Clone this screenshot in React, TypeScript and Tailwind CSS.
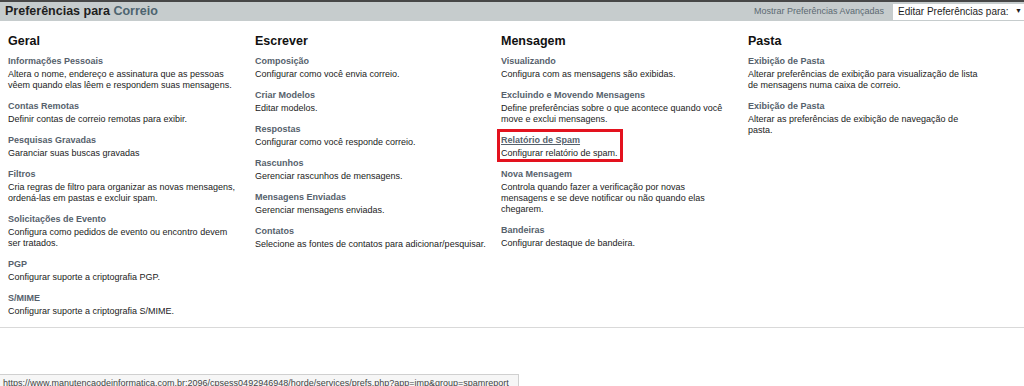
type Item = { title: string; desc: string; spam?: boolean };
type Section = { heading: string; width: string; items: Item[] };

const sections: Section[] = [
  {
    heading: "Geral",
    width: "w-[231px]",
    items: [
      { title: "Informações Pessoais", desc: "Altera o nome, endereço e assinatura que as pessoas vêem quando elas lêem e respondem suas mensagens." },
      { title: "Contas Remotas", desc: "Definir contas de correio remotas para exibir." },
      { title: "Pesquisas Gravadas", desc: "Garanciar suas buscas gravadas" },
      { title: "Filtros", desc: "Cria regras de filtro para organizar as novas mensagens, ordená-las em pastas e excluir spam." },
      { title: "Solicitações de Evento", desc: "Configura como pedidos de evento ou encontro devem ser tratados." },
      { title: "PGP", desc: "Configurar suporte a criptografia PGP." },
      { title: "S/MIME", desc: "Configurar suporte a criptografia S/MIME." },
    ],
  },
  {
    heading: "Escrever",
    width: "w-[240px]",
    items: [
      { title: "Composição", desc: "Configurar como você envia correio." },
      { title: "Criar Modelos", desc: "Editar modelos." },
      { title: "Respostas", desc: "Configurar como você responde correio." },
      { title: "Rascunhos", desc: "Gerenciar rascunhos de mensagens." },
      { title: "Mensagens Enviadas", desc: "Gerenciar mensagens enviadas." },
      { title: "Contatos", desc: "Selecione as fontes de contatos para adicionar/pesquisar." },
    ],
  },
  {
    heading: "Mensagem",
    width: "w-[225px]",
    items: [
      { title: "Visualizando", desc: "Configura com as mensagens são exibidas." },
      { title: "Excluindo e Movendo Mensagens", desc: "Define preferências sobre o que acontece quando você move e exclui mensagens." },
      { title: "Relatório de Spam", desc: "Configurar relatório de spam.", spam: true },
      { title: "Nova Mensagem", desc: "Controla quando fazer a verificação por novas mensagens e se deve notificar ou não quando elas chegarem." },
      { title: "Bandeiras", desc: "Configurar destaque de bandeira." },
    ],
  },
  {
    heading: "Pasta",
    width: "w-[233px]",
    items: [
      { title: "Exibição de Pasta", desc: "Alterar preferências de exibição para visualização de lista de mensagens numa caixa de correio." },
      { title: "Exibição de Pasta", desc: "Alterar as preferências de exibição de navegação de pasta." },
    ],
  },
];

function PrefItem({ item }: { item: Item }) {
  return (
    <div className="relative mb-[10px]">
      {item.spam && <span className="pointer-events-none absolute -top-[6px] -bottom-[3px] -left-[4px] w-[126px] border-[3px] border-[#e3121e]" />}
      <div className={`mb-[2px] text-[9px] leading-[11px] font-bold text-[#56616c] ${item.spam ? "underline" : ""}`}>{item.title}</div>
      <div className="text-[9px] leading-[11px] text-[#222]">{item.desc}</div>
    </div>
  );
}

export default function App() {
  return (
    <div className="flex h-[386px] w-[1024px] flex-col overflow-hidden bg-white font-['Liberation_Sans',Arial,sans-serif]">
      <div className="flex h-[21px] items-center justify-between border-t-2 border-[#474747] bg-[#c6cccd]">
        <div className="pl-[5px] text-[12.5px] font-bold text-[#1e1e1e]">
          Preferências para <span className="text-[#4d6470]">Correio</span>
        </div>
        <div className="flex items-center">
          <span className="mr-[9px] text-[9px] text-[#5c6a72]">Mostrar Preferências Avançadas</span>
          <div className="flex h-[16px] w-[131px] items-center justify-between bg-white pl-[5px] pr-[2px] text-[10px] text-[#1e1e1e]">
            <span>Editar Preferências para:</span>
            <span className="text-[7px]">▼</span>
          </div>
        </div>
      </div>

      <div className="grid grid-cols-[247px_246px_247px_1fr] border-b border-[#d9d9d9] pl-[8px] pt-[13px]">
        {sections.map((s) => (
          <div key={s.heading} className={s.width}>
            <h2 className="mb-[7px] text-[12.5px] leading-[15px] font-bold text-[#111]">{s.heading}</h2>
            {s.items.map((it, i) => (
              <PrefItem key={i} item={it} />
            ))}
          </div>
        ))}
      </div>

      <div className="mt-auto h-[12px] w-[519px] overflow-hidden whitespace-nowrap border-t border-r border-[#d0d0d0] bg-[#f6f6f6] pl-[3px] pt-[3px] text-[9px] leading-[11px] text-[#444]">
        https://www.manutencaodeinformatica.com.br:2096/cpsess0492946948/horde/services/prefs.php?app=imp&amp;group=spamreport
      </div>
    </div>
  );
}
